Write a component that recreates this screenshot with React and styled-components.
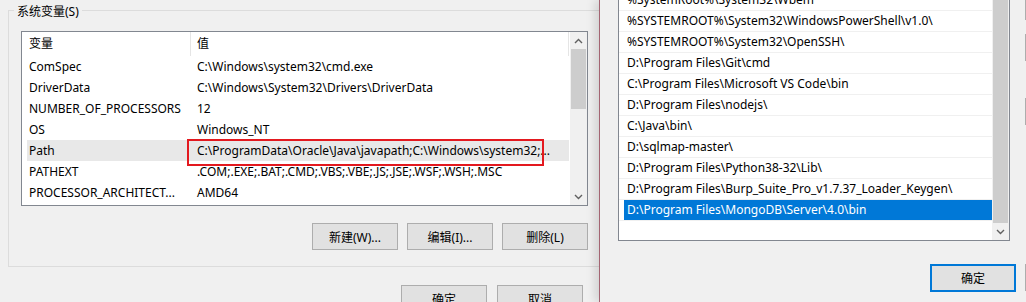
import React from "react";
import styled, { createGlobalStyle } from "styled-components";

const GlobalStyle = createGlobalStyle`
  html, body { margin: 0; padding: 0; background: #f0f0f0; }
  body {
    width: 1026px; height: 302px; overflow: hidden;
    font-family: "Noto Sans", "Noto Sans CJK SC", sans-serif;
    font-size: 12px; color: #000;
  }
  * { box-sizing: border-box; }
`;

const Screen = styled.div`
  display: flex;
  width: 1026px;
  height: 302px;
  overflow: hidden;
  background: #f0f0f0;
`;

/* ---------- left dialog ---------- */
const LeftWindow = styled.div`
  flex: 0 0 599px;
  overflow: hidden;
  padding: 10px 0 0 8px;
  display: flex;
  flex-direction: column;
`;

const GroupBox = styled.section`
  width: 640px;
  height: 257px;
  flex: 0 0 auto;
  border: 1px solid #dcdcdc;
  padding: 0 0 0 12px;
  display: flex;
  flex-direction: column;
  align-items: flex-start;
`;

const GroupTitle = styled.div`
  margin: -8px 0 0 -7px;
  padding: 0 3px;
  line-height: 17px;
  font-size: 12px;
  background: #f0f0f0;
  white-space: nowrap;
`;

const ListBox = styled.div`
  width: ${(p) => p.$w}px;
  height: ${(p) => p.$h}px;
  margin-top: ${(p) => p.$mt || 0}px;
  border: 1px solid #828790;
  background: #fff;
  display: flex;
  flex: 0 0 auto;
`;

const ListBody = styled.div`
  flex: 1;
  display: flex;
  flex-direction: column;
  min-width: 0;
`;

const Header = styled.div`
  display: grid;
  grid-template-columns: 169px 377px 1px;
  height: 24px;
`;

const HeaderCell = styled.div`
  padding-left: ${(p) => p.$pl}px;
  line-height: 24px;
  border-right: ${(p) => (p.$divider ? "1px solid #e5e5e5" : "none")};
  white-space: nowrap;
`;

const HeaderEnd = styled.div`
  background: #e5e5e5;
`;

const Rows = styled.div`
  padding: 0 1px 0 5px;
  display: flex;
  flex-direction: column;
`;

const VarRow = styled.div`
  position: relative;
  display: grid;
  grid-template-columns: 163px 1fr;
  height: 21px;
  line-height: 21px;
  background: ${(p) => (p.$active ? "#e8e8e8" : "transparent")};
`;

const NameCell = styled.div`
  padding-left: 2px;
  white-space: nowrap;
  overflow: hidden;
`;

const ValueCell = styled.div`
  padding-left: 7px;
  white-space: nowrap;
  overflow: hidden;
`;

const Highlight = styled.div`
  position: absolute;
  left: 160px;
  top: -1px;
  width: 357px;
  height: 27px;
  border: 2px solid #e3191f;
  pointer-events: none;
`;

const ScrollBar = styled.div`
  flex: 0 0 17px;
  background: #f0f0f0;
  display: flex;
  flex-direction: column;
`;

const ArrowBox = styled.div`
  flex: 0 0 17px;
  display: flex;
  align-items: center;
  justify-content: center;
`;

const Thumb = styled.div`
  margin: 0 1px;
  background: #cdcdcd;
  flex: ${(p) => (p.$fill ? "1" : `0 0 ${p.$h}px`)};
`;

const Spacer = styled.div`
  flex: 1;
`;

const ButtonRow = styled.div`
  display: flex;
  justify-content: ${(p) => p.$justify || "flex-end"};
  gap: ${(p) => p.$gap || 9}px;
  width: ${(p) => (p.$w ? `${p.$w}px` : "auto")};
  margin-top: ${(p) => p.$mt || 0}px;
  margin-left: ${(p) => p.$ml || 0}px;
  flex: 0 0 auto;
`;

const Button = styled.div`
  flex: 0 0 86px;
  width: 86px;
  height: ${(p) => (p.$primary ? 28 : 27)}px;
  background: #e1e1e1;
  border: ${(p) => (p.$primary ? "2px solid #0078d7" : "1px solid #adadad")};
  display: flex;
  align-items: center;
  justify-content: center;
  font-size: 12px;
  white-space: nowrap;
`;

const BottomButtons = styled.div`
  display: flex;
  gap: 10px;
  margin-top: 18px;
  padding-left: 393px;
`;

/* ---------- right dialog ---------- */
const RightWindow = styled.div`
  flex: 1;
  position: relative;
  z-index: 1;
  background: #f0f0f0;
  border-left: 1px solid #a36472;
  box-shadow: -4px 0 9px rgba(0, 0, 0, 0.13);
  padding-left: 18px;
  display: flex;
  flex-direction: column;
  overflow: hidden;
`;

const TopArea = styled.div`
  display: flex;
  gap: 15px;
  align-items: flex-start;
`;

const PathRow = styled.div`
  height: 21px;
  border-bottom: 1px solid #f0f0f0;
  padding-left: 5px;
  flex: 0 0 21px;
`;

const PathInner = styled.div`
  height: 20px;
  line-height: 20px;
  padding-left: 3px;
  white-space: nowrap;
  overflow: hidden;
  background: ${(p) => (p.$selected ? "#0078d7" : "transparent")};
  color: ${(p) => (p.$selected ? "#fff" : "#000")};
`;

const SideButtons = styled.div`
  display: flex;
  flex-direction: column;
  margin-top: ${(p) => p.$mt}px;
`;

const SideButton = styled.div`
  width: 86px;
  height: 27px;
  background: #e1e1e1;
  border: 1px solid #adadad;
  margin-bottom: ${(p) => p.$mb}px;
`;

const Chevron = ({ up }) => (
  <svg width="9" height="6" viewBox="0 0 9 6">
    <path
      d={up ? "M1 5 L4.5 1.5 L8 5" : "M1 1 L4.5 4.5 L8 1"}
      fill="none"
      stroke="#606060"
      strokeWidth="1.4"
    />
  </svg>
);

const vars = [
  ["ComSpec", "C:\\Windows\\system32\\cmd.exe"],
  ["DriverData", "C:\\Windows\\System32\\Drivers\\DriverData"],
  ["NUMBER_OF_PROCESSORS", "12"],
  ["OS", "Windows_NT"],
  ["Path", "C:\\ProgramData\\Oracle\\Java\\javapath;C:\\Windows\\system32;..."],
  ["PATHEXT", ".COM;.EXE;.BAT;.CMD;.VBS;.VBE;.JS;.JSE;.WSF;.WSH;.MSC"],
  ["PROCESSOR_ARCHITECT...", "AMD64"],
];

const paths = [
  "C:\\ProgramData\\Oracle\\Java\\javapath",
  "%SystemRoot%\\system32",
  "%SystemRoot%",
  "%SystemRoot%\\System32\\Wbem",
  "%SYSTEMROOT%\\System32\\WindowsPowerShell\\v1.0\\",
  "%SYSTEMROOT%\\System32\\OpenSSH\\",
  "D:\\Program Files\\Git\\cmd",
  "C:\\Program Files\\Microsoft VS Code\\bin",
  "D:\\Program Files\\nodejs\\",
  "C:\\Java\\bin\\",
  "D:\\sqlmap-master\\",
  "D:\\Program Files\\Python38-32\\Lib\\",
  "D:\\Program Files\\Burp_Suite_Pro_v1.7.37_Loader_Keygen\\",
  "D:\\Program Files\\MongoDB\\Server\\4.0\\bin",
];

export default function App() {
  return (
    <>
      <GlobalStyle />
      <Screen>
        <LeftWindow>
          <GroupBox>
            <GroupTitle>系统变量(S)</GroupTitle>
            <ListBox $w={567} $h={175} $mt={11}>
              <ListBody>
                <Header>
                  <HeaderCell $pl={7} $divider>变量</HeaderCell>
                  <HeaderCell $pl={6}>值</HeaderCell>
                  <HeaderEnd />
                </Header>
                <Rows>
                  {vars.map(([n, v]) => (
                    <VarRow key={n} $active={n === "Path"}>
                      <NameCell>{n}</NameCell>
                      <ValueCell>{v}</ValueCell>
                      {n === "Path" && <Highlight />}
                    </VarRow>
                  ))}
                </Rows>
              </ListBody>
              <ScrollBar>
                <ArrowBox><Chevron up /></ArrowBox>
                <Thumb $h={60} />
                <Spacer />
                <ArrowBox><Chevron /></ArrowBox>
              </ScrollBar>
            </ListBox>
            <ButtonRow $w={567} $mt={17}>
              <Button>新建(W)...</Button>
              <Button>编辑(I)...</Button>
              <Button>删除(L)</Button>
            </ButtonRow>
          </GroupBox>
          <BottomButtons>
            <Button>确定</Button>
            <Button>取消</Button>
          </BottomButtons>
        </LeftWindow>

        <RightWindow>
          <TopArea>
            <ListBox $w={392} $h={315} $mt={-74}>
              <ListBody>
                {paths.map((p, i) => (
                  <PathRow key={p}>
                    <PathInner $selected={i === paths.length - 1}>{p}</PathInner>
                  </PathRow>
                ))}
              </ListBody>
              <ScrollBar>
                <ArrowBox><Chevron up /></ArrowBox>
                <Thumb $fill />
                <ArrowBox><Chevron /></ArrowBox>
              </ScrollBar>
            </ListBox>
            <SideButtons $mt={-7}>
              <SideButton $mb={14} />
              <SideButton $mb={37} />
              <SideButton $mb={0} />
            </SideButtons>
          </TopArea>
          <ButtonRow $gap={9} $ml={312} $mt={23} $justify="flex-start">
            <Button $primary>确定</Button>
            <Button>取消</Button>
          </ButtonRow>
        </RightWindow>
      </Screen>
    </>
  );
}
